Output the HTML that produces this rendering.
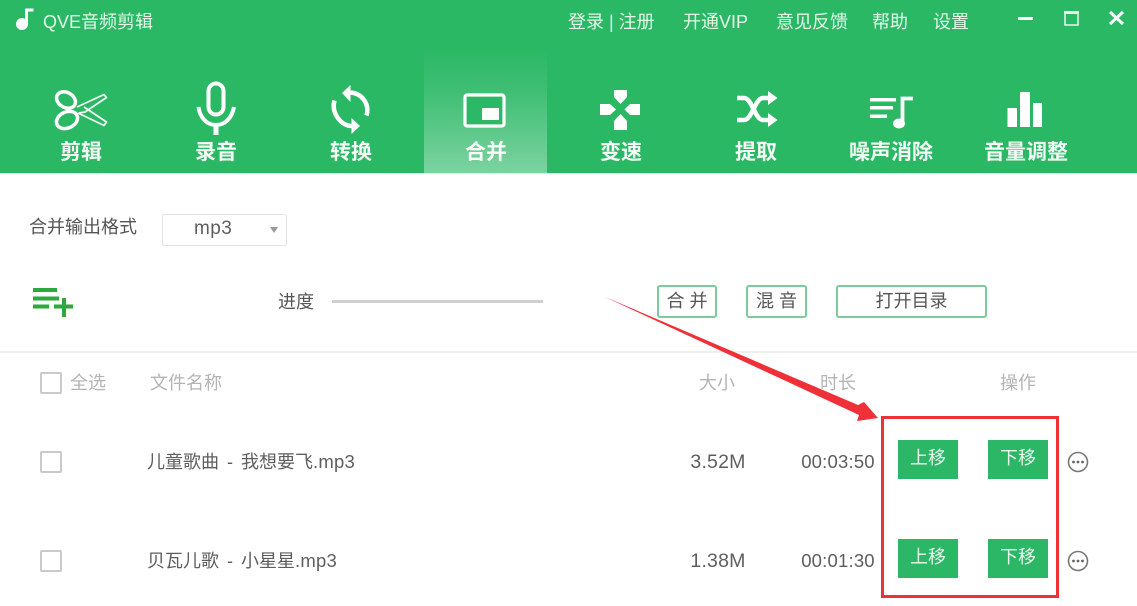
<!DOCTYPE html>
<html lang="zh-CN"><head><meta charset="utf-8"><title>QVE音频剪辑</title>
<style>
html,body{margin:0;padding:0;background:#fff}
body{width:1137px;height:606px;position:relative;overflow:hidden;font-family:"Liberation Sans","Noto Sans CJK SC",sans-serif}
#w{position:absolute;left:0;top:0;width:1137px;height:606px;filter:blur(.35px)}
.t{position:absolute;white-space:nowrap;line-height:20px;height:20px}
.c{transform:translateX(-50%)}
.top{color:#e4f6ea;font-size:18px;top:12px}
.nav{color:#fff;font-size:21px;font-weight:700;top:143px;opacity:.95}
.head{color:#b4b4b4;font-size:18px;top:373px}
.dark{color:#5e5e5e;font-size:18px}
.num{font-size:18.500px;letter-spacing:.2px}
.btn{position:absolute;box-sizing:border-box;height:33px;top:285px;border:2px solid #7ccb9c;border-radius:3px;background:#fff;color:#555;font-size:18px;line-height:29px;text-align:center;white-space:nowrap}
.g{position:absolute;width:60px;height:39px;background:#2bb765;color:#e9f9ef;font-size:18px;line-height:37px;text-align:center}
.cb{position:absolute;box-sizing:border-box;width:22px;height:22px;border:2px solid #cacaca;border-radius:2px;background:#fff;left:40px}
</style></head><body><div id="w">
<div style="position:absolute;left:0;top:0;width:1137px;height:173px;background:#2bb865"></div>
<div style="position:absolute;left:424px;top:50px;width:123px;height:123px;background:linear-gradient(180deg,rgba(255,255,255,0) 0%,rgba(255,255,255,.1) 35%,rgba(255,255,255,.38) 100%)"></div>
<div style="position:absolute;left:0;top:173px;width:1137px;height:1px;background:#d9efe1"></div>

<svg style="position:absolute;left:0;top:0" width="1137" height="173" viewBox="0 0 1137 173" fill="none">
<!-- logo -->
<ellipse cx="22" cy="24" rx="6" ry="6" fill="#fff"/><path d="M26.500 24V10H33.500" stroke="#fff" stroke-width="3"/>
<!-- window -->
<rect x="1018" y="17" width="15" height="3" fill="#fff"/>
<rect x="1065" y="12" width="13" height="13" stroke="#e6f7ec" stroke-width="1.500"/><rect x="1064" y="11" width="15" height="3" fill="#e6f7ec"/>
<path d="M1110 12L1123 24M1123 12L1110 24" stroke="#fff" stroke-width="3"/>
<!-- scissors -->
<ellipse cx="66" cy="100" rx="10" ry="7.500" transform="rotate(30 66 100)" stroke="#fff" stroke-width="3.500"/>
<ellipse cx="67" cy="120" rx="11" ry="8" transform="rotate(-25 67 120)" stroke="#fff" stroke-width="3.500"/>
<path d="M77 107L104 94.500L106.500 97.500L85 112L79 113M84 107L106.500 122L104 125.500L78 113" stroke="#f1fbf5" stroke-width="1.700" stroke-linejoin="round"/>
<!-- mic -->
<rect x="208.500" y="83.500" width="15" height="31" rx="7.500" stroke="#fff" stroke-width="4"/>
<path d="M198.500 107C200 118 207 125 216 125S232 118 234 107" stroke="#fff" stroke-width="4"/><rect x="213.500" y="124" width="5" height="11" fill="#fff"/>
<!-- sync -->
<path d="M350 92.500C361 93 370 103 366.500 115.500" stroke="#fff" stroke-width="4.500"/><path d="M342 93L350.500 85V102Z" fill="#fff"/>
<path d="M334.500 100.500C331 113 341 126 352 126" stroke="#fff" stroke-width="4.500"/><path d="M360 126L351.500 118V134Z" fill="#fff"/>
<!-- merge -->
<rect x="465" y="95" width="39" height="31" rx="2" fill="#2cb866" stroke="#fff" stroke-width="3.200"/><rect x="482" y="108" width="17" height="12" fill="#fff"/>
<!-- gamepad -->
<path d="M614 90H627V97L620.500 104L614 97Z" fill="#fff"/>
<path d="M620.500 114L627 121V130H614V121Z" fill="#fff"/>
<path d="M600 104H610L616 109.500L610 115H600Z" fill="#fff"/>
<path d="M640 104H630L624.500 109.500L630 115H640Z" fill="#fff"/>
<!-- shuffle -->
<path d="M737 98H744C752 98 755 120 763 120H770M737 120H744C752 120 755 98 763 98H770" stroke="#fff" stroke-width="4.500"/>
<path d="M768 91L777.500 98L768 105Z M768 113L777.500 120L768 127Z" fill="#fff"/>
<!-- denoise -->
<rect x="870" y="98" width="26" height="3.500" fill="#fff"/><rect x="870" y="106" width="23" height="3.500" fill="#fff"/><rect x="870" y="114.500" width="17" height="3.500" fill="#fff"/>
<path d="M902.500 123V98.500H913" stroke="#fff" stroke-width="3.800"/><ellipse cx="899" cy="123.500" rx="6" ry="5" fill="#fff"/>
<!-- bars -->
<rect x="1007.500" y="108" width="9.500" height="19" fill="#fff"/><rect x="1020" y="92" width="10" height="35" fill="#fff"/><rect x="1033" y="103" width="9" height="24" fill="#fff"/>
</svg>

<div class="t top" style="left:43px">QVE音频剪辑</div>
<div class="t top" style="left:568px">登录 | 注册</div>
<div class="t top" style="left:683px">开通VIP</div>
<div class="t top" style="left:776px">意见反馈</div>
<div class="t top" style="left:872px">帮助</div>
<div class="t top" style="left:933px">设置</div>

<div class="t nav c" style="left:81px">剪辑</div>
<div class="t nav c" style="left:216px">录音</div>
<div class="t nav c" style="left:351px">转换</div>
<div class="t nav c" style="left:486px">合并</div>
<div class="t nav c" style="left:621px">变速</div>
<div class="t nav c" style="left:756px">提取</div>
<div class="t nav c" style="left:891px">噪声消除</div>
<div class="t nav c" style="left:1026px">音量调整</div>

<div class="t dark" style="left:29px;top:217px;color:#555">合并输出格式</div>
<div style="position:absolute;box-sizing:border-box;left:162px;top:214px;width:125px;height:32px;border:1px solid #e4e4e4;border-radius:2px;background:#fff"></div>
<div class="t" style="left:194px;top:219px;font-size:19px;letter-spacing:.4px;color:#5e5e5e">mp3</div>
<div style="position:absolute;left:252px;top:227px;width:0;height:0;border-left:4px solid transparent;border-right:4px solid transparent;border-top:6px solid #9a9a9a;margin-left:18px"></div>

<svg style="position:absolute;left:0;top:280px" width="80" height="40" viewBox="0 280 80 40">
<rect x="33" y="288" width="24" height="4" fill="#2ea83c"/><rect x="33" y="296.500" width="26" height="4" fill="#2ea83c"/><rect x="33" y="304.500" width="16" height="4" fill="#2ea83c"/>
<rect x="62" y="298" width="4" height="19" fill="#2ea83c"/><rect x="54" y="304.500" width="19" height="4" fill="#2ea83c"/>
</svg>
<div class="t dark" style="left:278px;top:292px;color:#555">进度</div>
<div style="position:absolute;left:332px;top:300px;width:211px;height:3px;background:#cfcfcf"></div>
<div class="btn" style="left:657px;width:60px">合 并</div>
<div class="btn" style="left:746px;width:61px">混 音</div>
<div class="btn" style="left:836px;width:151px">打开目录</div>

<div style="position:absolute;left:0;top:351px;width:1137px;height:2px;background:#efefef"></div>
<div class="cb" style="top:372px"></div>
<div class="t head" style="left:70px">全选</div>
<div class="t head" style="left:150px">文件名称</div>
<div class="t head" style="left:699px">大小</div>
<div class="t head" style="left:820px">时长</div>
<div class="t head" style="left:1000px">操作</div>

<div class="cb" style="top:451px"></div>
<div class="t dark" style="left:147px;top:452px;word-spacing:3px">儿童歌曲 - 我想要飞<span class="num">.mp3</span></div>
<div class="t dark num c" style="left:718px;top:452px;font-size:19.500px">3.52M</div>
<div class="t dark num c" style="left:838px;top:452px">00:03:50</div>
<div class="g" style="left:898px;top:440px">上移</div>
<div class="g" style="left:988px;top:440px">下移</div>

<div class="cb" style="top:550px"></div>
<div class="t dark" style="left:147px;top:551px;word-spacing:3px">贝瓦儿歌 - 小星星<span class="num">.mp3</span></div>
<div class="t dark num c" style="left:718px;top:551px;font-size:19.500px">1.38M</div>
<div class="t dark num c" style="left:838px;top:551px">00:01:30</div>
<div class="g" style="left:898px;top:539px">上移</div>
<div class="g" style="left:988px;top:539px">下移</div>

<svg style="position:absolute;left:0;top:0" width="1137" height="606" viewBox="0 0 1137 606" fill="none">
<circle cx="1078" cy="462" r="9.500" stroke="#777" stroke-width="1.600"/><circle cx="1073.500" cy="462" r="1.400" fill="#666"/><circle cx="1078" cy="462" r="1.400" fill="#666"/><circle cx="1082.500" cy="462" r="1.400" fill="#666"/>
<circle cx="1078" cy="561" r="9.500" stroke="#777" stroke-width="1.600"/><circle cx="1073.500" cy="561" r="1.400" fill="#666"/><circle cx="1078" cy="561" r="1.400" fill="#666"/><circle cx="1082.500" cy="561" r="1.400" fill="#666"/>
<rect x="882.500" y="417.500" width="175" height="179" stroke="#ef3038" stroke-width="3"/>
<path d="M604 296.500L858 405L864 402L878 418L857 421L859 415Z" fill="#ef3038"/>
</svg>
</div></body></html>
